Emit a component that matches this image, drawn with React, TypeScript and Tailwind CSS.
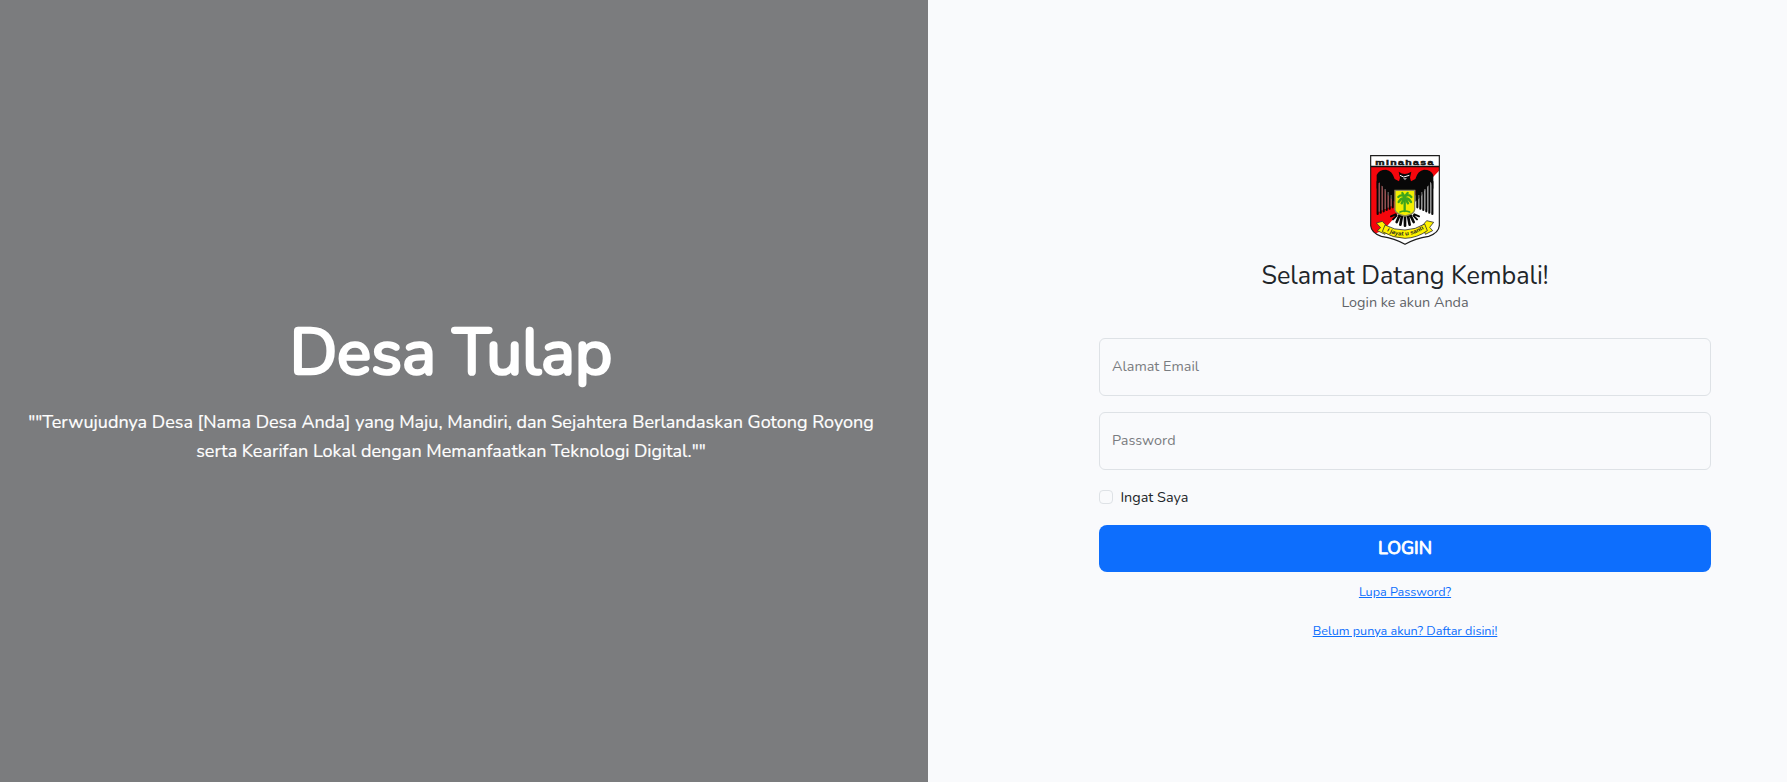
const OUTLINE = "M32 22H238V232Q236 254 206 264Q165 270 135 288Q105 270 64 264Q34 254 32 232Z";
const FEATHERS = [0, 1, 2, 3, 4, 5];

function Crest() {
  return (
    <svg viewBox="30 20 210 270" className="h-[90px] w-[70px]" aria-label="Minahasa">
      <defs>
        <clipPath id="shield">
          <path d={OUTLINE} />
        </clipPath>
        <path id="motto" d="M80 248Q135 279 196 239" />
      </defs>
      <g clipPath="url(#shield)">
        <rect x="30" y="20" width="210" height="270" fill="#fff" />
        <path d="M30 54H240V64L118 192L70 246L30 262Z" fill="#f5060c" />
        <rect x="30" y="20" width="210" height="33" fill="#fff" />
        <path d="M30 54.500H240" stroke="#111" strokeWidth="5" />
      </g>
      <path d={OUTLINE} fill="none" stroke="#1c1c1c" strokeWidth="3.500" />
      <text
        x="46"
        y="49"
        textLength="178"
        lengthAdjust="spacingAndGlyphs"
        letterSpacing="3"
        fontFamily="Liberation Sans, sans-serif"
        fontWeight="700"
        fontSize="23"
        fill="#111"
        stroke="#111"
        strokeWidth="1.400"
      >
        minahasa
      </text>
      {FEATHERS.map((i) => (
        <g key={i} fill="none" stroke="#080808" strokeWidth="6.500" strokeLinecap="round">
          <path d={`M${53 + i * 9} 100V${197 - i * 4}`} />
          <path d={`M${217 - i * 9} 100V${197 - i * 4}`} />
        </g>
      ))}
      <path
        d="M50 80Q57 64 78 64Q97 67 104 92L117 99L120 88L116 70Q126 77 134 77Q143 77 154 70L150 88L153 99L166 92Q173 67 192 64Q213 64 220 80V122L212 100L205 112L200 120L194 126L186 140L178 150L166 160V126H104V160L92 150L84 140L76 126L70 120L65 112L58 100L50 122Z"
        fill="#080808"
      />
      {FEATHERS.slice(0, 5).map((i) => (
        <g key={i} fill="none" stroke="#8f8f8f" strokeWidth="2.500">
          <path d={`M${57.5 + i * 9} ${104 + i * 9}V${190 - i * 4}`} />
          <path d={`M${212.500 - i * 9} ${104 + i * 9}V${190 - i * 4}`} />
        </g>
      ))}
      <path d="M120 81L131 86L148 81" stroke="#fff" strokeWidth="3" fill="none" />
      <path d="M129 89H141L135 96Z" fill="#999" />
      <path
        d="M107 198L93 204M110 202L99 213M163 198L177 204M160 202L171 213"
        stroke="#080808"
        strokeWidth="6"
        strokeLinecap="round"
      />
      <path
        d="M120 202L110 221M127 202L121 229M135 202V232M143 202L149 229M150 202L161 221"
        stroke="#fff"
        strokeWidth="12"
        strokeLinecap="round"
      />
      <path
        d="M120 198L110 221M127 198L121 229M135 198V232M143 198L149 229M150 198L161 221"
        stroke="#080808"
        strokeWidth="8"
        strokeLinecap="round"
      />
      <path d="M105 126H164V184Q162 198 135 203Q108 198 105 184Z" fill="#f4ee00" stroke="#8b8b55" strokeWidth="4" />
      <g fill="none" stroke="#3fa51c" strokeWidth="7" strokeLinecap="round">
        <path d="M134 148V188" />
        <path d="M134 146Q124 136 115 146M134 146Q145 135 154 146M133 149Q122 150 116 161M135 149Q147 150 153 161M133 144L127 134M135 144L143 134M132 152L125 165M137 152L144 165" />
        <path d="M120 191Q134 185 149 191" strokeWidth="5" />
      </g>
      <path d="M49 224L67 219L81 234L75 258L52 247L62 238Z" fill="#fff200" stroke="#333" strokeWidth="2.500" />
      <path d="M221 222L200 217L188 231L196 258L218 247L209 237Z" fill="#fff200" stroke="#333" strokeWidth="2.500" />
      <path
        d="M75 230Q103 246 135 245Q167 244 194 227L202 247Q171 269 135 270Q98 269 67 250Z"
        fill="#fff200"
        stroke="#333"
        strokeWidth="2.500"
      />
      <text fontFamily="Liberation Sans, sans-serif" fontWeight="700" fontSize="17" fill="#222">
        <textPath href="#motto" textLength="118" lengthAdjust="spacingAndGlyphs">
          i jayat u santi
        </textPath>
      </text>
    </svg>
  );
}

function Field({ type, placeholder }: { type: string; placeholder: string }) {
  return (
    <input
      type={type}
      placeholder={placeholder}
      aria-label={placeholder}
      className="block h-[58px] w-full rounded-md border border-[#dee2e6] bg-transparent px-3 pb-[3px] text-[14.4px] text-[#212529] placeholder:text-[#797c80] placeholder:opacity-100"
    />
  );
}

export default function App() {
  return (
    <main className="flex h-[782px] overflow-hidden bg-[#f9fafc] font-['Nunito','Lato',sans-serif] text-[#212529]">
      <section className="flex w-[928px] shrink-0 flex-col bg-[#7b7c7e] pt-[313px] pr-[26px] text-center text-white">
        <h1 className="text-[64px] leading-[80px] font-normal [-webkit-text-stroke:2.7px_white]">Desa Tulap</h1>
        <p className="mt-[15px] text-[18px] leading-[29px] whitespace-nowrap [-webkit-text-stroke:0.2px_white]">
          ""Terwujudnya Desa [Nama Desa Anda] yang Maju, Mandiri, dan Sejahtera Berlandaskan Gotong Royong
          <br />
          serta Kearifan Lokal dengan Memanfaatkan Teknologi Digital.""
        </p>
      </section>

      <section className="flex flex-1 flex-col pt-[155px] pr-[76px] pl-[171px]">
        <div className="flex flex-col items-center">
          <Crest />
          <h2 className="mt-4 text-[25.2px] leading-[30px]">Selamat Datang Kembali!</h2>
          <p className="text-[14.4px] leading-[22px] text-[#5f6368]">Login ke akun Anda</p>
        </div>

        <form className="mt-[25px]" onSubmit={(e) => e.preventDefault()}>
          <div className="flex flex-col gap-4">
            <Field type="email" placeholder="Alamat Email" />
            <Field type="password" placeholder="Password" />
          </div>
          <label className="mt-4 flex h-[22px] items-center gap-[7px] text-[14.4px] leading-[22px]">
            <input
              type="checkbox"
              className="size-[14.4px] appearance-none rounded-[4px] border border-[#dee2e6] bg-transparent"
            />
            <span>Ingat Saya</span>
          </label>
          <button className="mt-[17px] block h-[47px] w-full rounded-lg bg-[#0d6efd] text-[18px] text-white [-webkit-text-stroke:0.9px_white]">
            LOGIN
          </button>
        </form>

        <div className="mt-[10px] flex flex-col items-center gap-[19px] text-[12.6px] leading-[20px] text-[#0d6efd]">
          <a href="#" className="underline">Lupa Password?</a>
          <a href="#" className="underline">Belum punya akun? Daftar disini!</a>
        </div>
      </section>
    </main>
  );
}
